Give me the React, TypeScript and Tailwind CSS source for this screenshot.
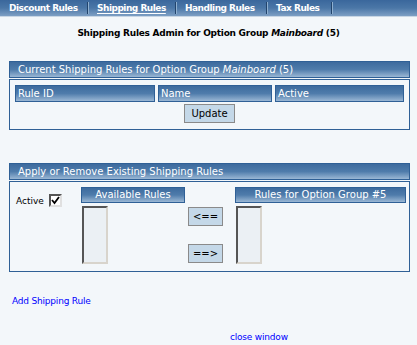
import React from "react";

const font = { fontFamily: '"DejaVu Sans", Verdana, sans-serif' };

function Bar({ children, className = "" }: { children: React.ReactNode; className?: string }) {
  return (
    <div
      className={`border border-[#2f6096] bg-gradient-to-b from-[#3d6b9e] via-[#4f7cab] to-[#9ab7d4] text-white text-[10px] leading-none flex items-center ${className}`}
    >
      {children}
    </div>
  );
}

function ListBox() {
  return (
    <div className="w-[26px] h-[58px] border-2 border-t-[#555] border-l-[#555] border-r-[#d8d4cc] border-b-[#d8d4cc] bg-[#ebf0f4]" />
  );
}

function SmallButton({ children, className = "" }: { children: React.ReactNode; className?: string }) {
  return (
    <button className={`border border-[#8a8a8a] bg-[#c4d8e8] text-black text-[10px] leading-none flex items-center justify-center ${className}`}>
      {children}
    </button>
  );
}

const tabs = [
  { label: "Discount Rules", w: "w-[87px]", pl: "pl-[9px]" },
  { label: "Shipping Rules", w: "w-[86px]", pl: "pl-[8px]" },
  { label: "Handling Rules", w: "w-[89px]", pl: "pl-[8px]" },
  { label: "Tax Rules", w: "w-[63px]", pl: "pl-[8px]" },
];

export default function App() {
  return (
    <div className="w-[417px] h-[345px] bg-[#f3f7fa] overflow-hidden" style={font}>
      {/* TABS */}
      <div className="h-[17px] flex items-stretch bg-gradient-to-b from-[#3a679c] via-[#4b77a7] to-[#7d9fc4] border-b border-[#c8d6e4]">
        {tabs.map((t) => (
          <div key={t.label} className="flex items-stretch">
            <div className={`${t.w} ${t.pl} flex items-center text-white font-bold text-[9px] tracking-[-0.5px] leading-none`}>
              <span className={t.label === "Shipping Rules" ? "underline underline-offset-2" : ""}>{t.label}</span>
            </div>
            <div className="w-[2px] my-[2px] border-l border-[#22446c] bg-[#8fb0d0]" />
          </div>
        ))}
      </div>

      {/* TITLE */}
      <div className="text-center font-bold text-[9px] tracking-[-0.25px] text-black mt-[10px] leading-[12px]">
        Shipping Rules Admin for Option Group <i>Mainboard</i> (5)
      </div>

      {/* CURRENT RULES */}
      <div className="mx-[9px] mt-[22px] w-[401px]">
        <Bar className="h-[17px] pl-2">
          <span>
            Current Shipping Rules for Option Group <i>Mainboard</i> (5)
          </span>
        </Bar>
        <div className="mt-[1px] border border-[#2f6096] h-[51px] px-[5px] pt-[5px]">
          <div className="flex gap-[3px]">
            <Bar className="w-[141px] h-[17px] pl-[2px]">Rule ID</Bar>
            <Bar className="w-[115px] h-[17px] pl-[2px]">Name</Bar>
            <Bar className="w-[130px] h-[17px] pl-[2px]">Active</Bar>
          </div>
          <div className="flex justify-center mt-[2px]">
            <SmallButton className="w-[51px] h-[19px]">Update</SmallButton>
          </div>
        </div>
      </div>

      {/* APPLY / REMOVE */}
      <div className="mx-[9px] mt-[33px] w-[401px]">
        <Bar className="h-[17px] pl-2">Apply or Remove Existing Shipping Rules</Bar>
        <div className="mt-[1px] border border-[#2f6096] h-[91px] flex pt-[5px]">
          <div className="w-[71px] flex items-end h-[18px] mt-[2px] pl-[6px] gap-[5px]">
            <span className="text-[9px] leading-none text-black mb-[1px]">Active</span>
            <span className="w-[13px] h-[13px] border-2 border-t-[#555] border-l-[#555] border-r-[#e0e0e0] border-b-[#e0e0e0] bg-white flex items-center justify-center">
              <svg width="9" height="9" viewBox="0 0 9 9">
                <path d="M1 4 L3.5 7 L8 1" stroke="black" strokeWidth="1.8" fill="none" />
              </svg>
            </span>
          </div>
          <div className="w-[104px] flex flex-col gap-[3px]">
            <Bar className="h-[16px] justify-center">Available Rules</Bar>
            <div className="ml-[1px]"><ListBox /></div>
          </div>
          <div className="w-[50px] flex flex-col items-start pl-[3px] gap-[18px] pt-[20px]">
            <SmallButton className="w-[35px] h-[19px]">&lt;==</SmallButton>
            <SmallButton className="w-[35px] h-[19px]">==&gt;</SmallButton>
          </div>
          <div className="w-[171px] flex flex-col gap-[3px]">
            <Bar className="h-[16px] justify-center">Rules for Option Group #5</Bar>
            <div className="ml-[1px]"><ListBox /></div>
          </div>
        </div>
      </div>

      {/* LINKS */}
      <div className="pl-[12px] mt-[25px] text-[9px] tracking-[-0.2px] leading-none text-[#0000ff]">Add Shipping Rule</div>
      <div className="pl-[230px] mt-[27px] text-[9px] tracking-[-0.2px] leading-none text-[#0000ff]">close window</div>
    </div>
  );
}
